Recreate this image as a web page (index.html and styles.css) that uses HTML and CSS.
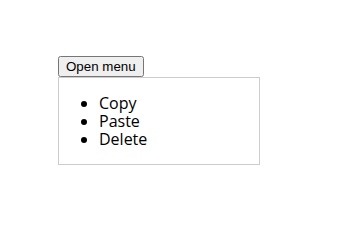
FILE: index.html
```html
<!DOCTYPE html>
<html>
<head>
<meta charset="utf-8">
<link rel="stylesheet" href="styles.css">
</head>
<body>
<div class="wrap">
  <button class="trigger" type="button">Open menu</button>
  <div class="menu">
    <ul class="menu-list">
      <li>Copy</li>
      <li>Paste</li>
      <li>Delete</li>
    </ul>
  </div>
</div>
</body>
</html>
```
FILE: styles.css
```css
body {
  margin: 8px;
  background: #fff;
  font-family: "Open Sans", sans-serif;
}
.wrap {
  padding: 48px 0 0 50px;
}
.trigger {
  display: block;
  font-family: "Liberation Sans", Arial, sans-serif;
  font-size: 13.33px;
  color: #000;
  height: 21px;
  padding: 1px 6px;
  margin: 0;
}
.menu {
  width: 200px;
  border: 1px solid #cccccc;
}
.menu-list {
  margin: 16px 0;
  padding-left: 40px;
  font-size: 16px;
  line-height: 18px;
  color: #000;
}
```
